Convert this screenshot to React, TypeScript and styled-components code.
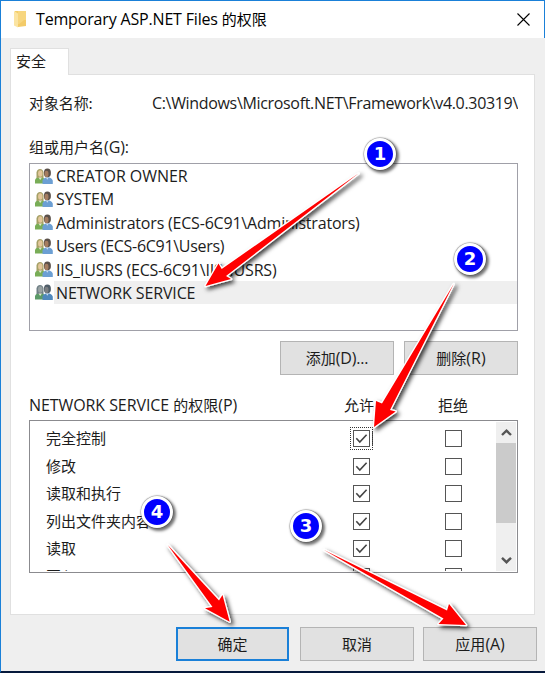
import React from "react";
import styled, { createGlobalStyle, css } from "styled-components";

const GlobalStyle = createGlobalStyle`
  * { box-sizing: border-box; }
  html, body { margin: 0; padding: 0; }
  body {
    width: 545px;
    height: 673px;
    overflow: hidden;
    font-family: "Noto Sans CJK SC", sans-serif;
    font-size: 15px;
    color: #1c1c1c;
  }
`;

const Dialog = styled.div`
  position: relative;
  display: flex;
  flex-direction: column;
  width: 545px;
  height: 673px;
  background: #efefef;
  border-left: 1px solid #1a80d8;
  border-bottom: 2px solid #06193c;
  overflow: hidden;
`;

const TitleBar = styled.header`
  display: flex;
  align-items: center;
  height: 38px;
  flex: none;
  padding: 0 14px 1px 13px;
  background: #fff;
  border-top: 1px solid #1a80d8;
  border-right: 1px solid #1a80d8;
  color: #000;
`;

const Title = styled.h1`
  margin: 0 auto 0 8px;
  font-size: 15px;
  font-weight: 400;
  line-height: 22px;
  white-space: nowrap;
`;

const Latin = styled.span<{ $spacing?: number }>`
  font-family: "Open Sans", "Noto Sans", sans-serif;
  font-size: 16px;
  letter-spacing: ${(p) => p.$spacing ?? 0}px;
  white-space: pre;
`;

const CloseButton = styled.button`
  display: flex;
  padding: 0;
  border: 0;
  background: none;
`;

const TabStrip = styled.div`
  display: flex;
  height: 27px;
  margin: 10px 0 -1px 9px;
  flex: none;
  z-index: 1;
`;

const Tab = styled.div`
  width: 59px;
  height: 27px;
  padding-left: 5px;
  line-height: 24px;
  background: #fff;
  border: 1px solid #e0e0e0;
  border-bottom: 0;
`;

const Panel = styled.main`
  display: flex;
  flex-direction: column;
  width: 525px;
  height: 541px;
  margin-left: 9px;
  padding: 0 16px 0 18px;
  flex: none;
  background: #fff;
  border: 1px solid #e0e0e0;
`;

const ObjectRow = styled.div`
  display: flex;
  height: 24px;
  margin-top: 16px;
  line-height: 24px;
  overflow: hidden;
`;

const ObjectLabel = styled.span`
  width: 123px;
  flex: none;
  letter-spacing: -0.1px;
`;

const GroupLabel = styled.div`
  height: 24px;
  margin-top: 20px;
  line-height: 24px;
`;

const UserList = styled.ul`
  height: 168px;
  margin: 4px 0 0;
  padding: 0;
  list-style: none;
  border: 1px solid #a0a0a8;
`;

const UserRow = styled.li`
  display: flex;
  height: 23.4px;
  padding-left: 5px;
`;

const UserName = styled.div<{ $selected?: boolean }>`
  flex: 1;
  margin-left: 1px;
  padding-left: 2px;
  line-height: 23.4px;
  ${(p) => p.$selected && css`background: #efefef;`}
`;

const ListActions = styled.div`
  display: flex;
  justify-content: flex-end;
  gap: 10px;
  margin-top: 10px;
`;

const Button = styled.button<{ $primary?: boolean }>`
  width: ${(p) => (p.$primary ? 113 : 114)}px;
  height: 34px;
  padding: 0;
  margin-right: ${(p) => (p.$primary ? 2 : 0)}px;
  font: inherit;
  line-height: 30px;
  color: #1c1c1c;
  background: #e1e1e1;
  border: ${(p) => (p.$primary ? "2px solid #1a80d8" : "1px solid #b4b4b4")};
`;

const PermissionHeader = styled.div`
  display: grid;
  grid-template-columns: 315px 94px 1fr;
  height: 24px;
  margin-top: 18px;
  line-height: 24px;
`;

const PermissionBox = styled.div`
  display: flex;
  height: 153px;
  margin-top: 3px;
  border: 1px solid #8b8b8f;
  padding: 1px;
`;

const PermissionRows = styled.div`
  flex: 1;
  padding-top: 3px;
  overflow: hidden;
`;

const PermissionRow = styled.div`
  display: grid;
  grid-template-columns: 307px 92px 1fr;
  align-items: center;
  height: 27.5px;
  padding-left: 15px;
  line-height: 26px;
`;

const PermissionName = styled.span`
  margin-top: -1px;
`;

const CheckBox = styled.span<{ $focused?: boolean }>`
  display: flex;
  width: 17px;
  height: 17px;
  border: 1px solid #555;
  background: #fff;
  ${(p) =>
    p.$focused &&
    css`
      outline: 1px dotted #333;
      outline-offset: 2px;
      box-shadow: 3px 0 0 -1px #fff, 4px 0 0 -1px #555;
    `}
`;

const ScrollBar = styled.div`
  display: flex;
  flex-direction: column;
  width: 20px;
  background: #efefef;
`;

const ScrollArrow = styled.div`
  display: flex;
  align-items: center;
  justify-content: center;
  height: 21px;
  flex: none;
`;

const ScrollThumb = styled.div`
  height: 80px;
  margin-bottom: auto;
  background: #cbcbcb;
`;

const Footer = styled.footer`
  display: flex;
  justify-content: flex-end;
  gap: 9px;
  margin-top: 12px;
  padding-right: 8px;
`;

const Pointers = styled.svg`
  position: absolute;
  top: 0;
  left: -1px;
  z-index: 2;
  pointer-events: none;
`;

const StepBadge = styled.div<{ $x: number; $y: number }>`
  position: absolute;
  z-index: 3;
  left: ${(p) => p.$x - 17}px;
  top: ${(p) => p.$y - 16}px;
  width: 32px;
  height: 32px;
  border: 3.500px solid #fff;
  border-radius: 50%;
  background: #0000fe;
  box-shadow: 0 0 1px 0.5px rgba(0, 0, 0, 0.35), 2px 2px 3px 1px rgba(0, 0, 0, 0.55);
  color: #fff;
  font: bold 18px/25px "DejaVu Sans", sans-serif;
  text-align: center;
`;

const UserGlyph = styled.svg`
  flex: none;
  margin-top: 3.5px;
`;

const FolderIcon = () => (
  <svg width="14" height="20" viewBox="0 0 14 20">
    <path d="M1 2h7v15H1z" fill="#f3cd68" />
    <path d="M4 2h8v13H4z" fill="#f7d67f" />
    <path d="M0 2l4 2.500v14l-4-2z" fill="#fbe4a2" />
    <path d="M10 11h2v6l-8 1v-2z" fill="#f3cb69" />
  </svg>
);

const UsersIcon = ({ dim }: { dim?: boolean }) => (
  <UserGlyph width="18" height="17" viewBox="0 0 18 17">
    <path d="M0 15.500V12q1-3 5-3.200 4 .2 5 3.400v3.300z" fill={dim ? "#5c9a68" : "#79ad57"} />
    <path d="M1.500 10V4.500Q2 1 5 1t3.500 3.500V10z" fill={dim ? "#718086" : "#a6a066"} />
    <ellipse cx="5.300" cy="5.500" rx="2.200" ry="3.200" fill={dim ? "#9aa3a4" : "#e3c79b"} />
    <path d="M3.500 9.500l1.700 2.500L7 9.500z" fill="#dfe8cb" />
    <path d="M7.500 16v-3.500q1-3 5-3.300 4.300.3 5.300 3.500V16z" fill={dim ? "#4f88bd" : "#6c9fd3"} />
    <ellipse cx="12.400" cy="5" rx="3.500" ry="4.400" fill={dim ? "#4f5d68" : "#5a5049"} />
    <ellipse cx="11.500" cy="6" rx="2" ry="3.200" fill={dim ? "#7c7f82" : "#a57d60"} />
    <path d="M11 9.500l1.200 2.200 1.500-2.200z" fill="#cfe0f2" />
  </UserGlyph>
);

const CheckMark = () => (
  <svg width="15" height="15" viewBox="0 0 15 15">
    <path d="M2.300 7.300l3.500 3.700 6.800-7.300" fill="none" stroke="#444" strokeWidth="1.600" />
  </svg>
);

const Chevron = ({ down }: { down?: boolean }) => (
  <svg width="11" height="9" viewBox="0 0 11 9">
    <path d={down ? "M1 1.800l4.500 4.400L10 1.800" : "M1 7l4.500-4.400L10 7"} fill="none" stroke="#555" strokeWidth="2.400" />
  </svg>
);

const users = [
  { name: "CREATOR OWNER", spacing: -0.05 },
  { name: "SYSTEM", spacing: -0.1 },
  { name: "Administrators (ECS-6C91\\Administrators)", spacing: -0.2 },
  { name: "Users (ECS-6C91\\Users)", spacing: -0.3 },
  { name: "IIS_IUSRS (ECS-6C91\\IIS_IUSRS)", spacing: -0.2 },
  { name: "NETWORK SERVICE", spacing: -0.13 },
];

const permissions = ["完全控制", "修改", "读取和执行", "列出文件夹内容", "读取", "写入"];

const arrows = [
  "358.7,173.3 221.7,269 218.5,263.5 205.5,286 231,279 226,276",
  "453.700,284 382,403.500 376,401 374,427 395.700,411.500 390,410",
  "324,550 447,610.500 449,604 466,625 438.500,624 443.500,618.500",
  "167.700,545 219,600.500 222.500,595 229.700,621.700 205,608.300 212.500,607",
];

const steps = [
  { n: 1, x: 380, y: 154 },
  { n: 2, x: 470, y: 259 },
  { n: 3, x: 306, y: 526 },
  { n: 4, x: 157, y: 512 },
];

export default function App() {
  return (
    <>
      <GlobalStyle />
      <Dialog>
        <TitleBar>
          <FolderIcon />
          <Title><Latin $spacing={-0.17}>Temporary ASP.NET Files </Latin>的权限</Title>
          <CloseButton aria-label="关闭">
            <svg width="13" height="13" viewBox="0 0 13 13">
              <path d="M.5.5l12 12M12.500.5l-12 12" stroke="#000" strokeWidth="1.100" />
            </svg>
          </CloseButton>
        </TitleBar>
        <TabStrip><Tab>安全</Tab></TabStrip>
        <Panel>
          <ObjectRow>
            <ObjectLabel>对象名称:</ObjectLabel>
            <Latin $spacing={-0.33}>C:\Windows\Microsoft.NET\Framework\v4.0.30319\</Latin>
          </ObjectRow>
          <GroupLabel>组或用户名<Latin $spacing={-0.1}>(G):</Latin></GroupLabel>
          <UserList>
            {users.map((u, i) => (
              <UserRow key={u.name}>
                <UsersIcon dim={i === 5} />
                <UserName $selected={i === 5}><Latin $spacing={u.spacing}>{u.name}</Latin></UserName>
              </UserRow>
            ))}
          </UserList>
          <ListActions>
            <Button>添加<Latin $spacing={-0.2}>(D)...</Latin></Button>
            <Button>删除<Latin>(R)</Latin></Button>
          </ListActions>
          <PermissionHeader>
            <span><Latin $spacing={-0.08}>NETWORK SERVICE </Latin>的权限<Latin>(P)</Latin></span>
            <span>允许</span>
            <span>拒绝</span>
          </PermissionHeader>
          <PermissionBox>
            <PermissionRows>
              {permissions.map((p, i) => (
                <PermissionRow key={p}>
                  <PermissionName>{p}</PermissionName>
                  <CheckBox $focused={i === 0}>{<CheckMark />}</CheckBox>
                  <CheckBox />
                </PermissionRow>
              ))}
            </PermissionRows>
            <ScrollBar>
              <ScrollArrow><Chevron /></ScrollArrow>
              <ScrollThumb />
              <ScrollArrow><Chevron down /></ScrollArrow>
            </ScrollBar>
          </PermissionBox>
        </Panel>
        <Footer>
          <Button $primary>确定</Button>
          <Button>取消</Button>
          <Button>应用<Latin $spacing={-0.1}>(A)</Latin></Button>
        </Footer>
        <Pointers width="545" height="673" viewBox="0 0 545 673">
          <defs>
            <filter id="arrow-shadow" x="-20%" y="-20%" width="140%" height="140%">
              <feDropShadow dx="2.500" dy="2.500" stdDeviation="2" floodColor="#000" floodOpacity="0.750" />
            </filter>
          </defs>
          {arrows.map((points) => (
            <g key={points} filter="url(#arrow-shadow)">
              <polygon points={points} fill="#fe0000" stroke="#fff" strokeWidth="2.600" strokeLinejoin="round" paintOrder="stroke" />
            </g>
          ))}
        </Pointers>
        {steps.map((s) => (
          <StepBadge key={s.n} $x={s.x} $y={s.y}>{s.n}</StepBadge>
        ))}
      </Dialog>
    </>
  );
}
